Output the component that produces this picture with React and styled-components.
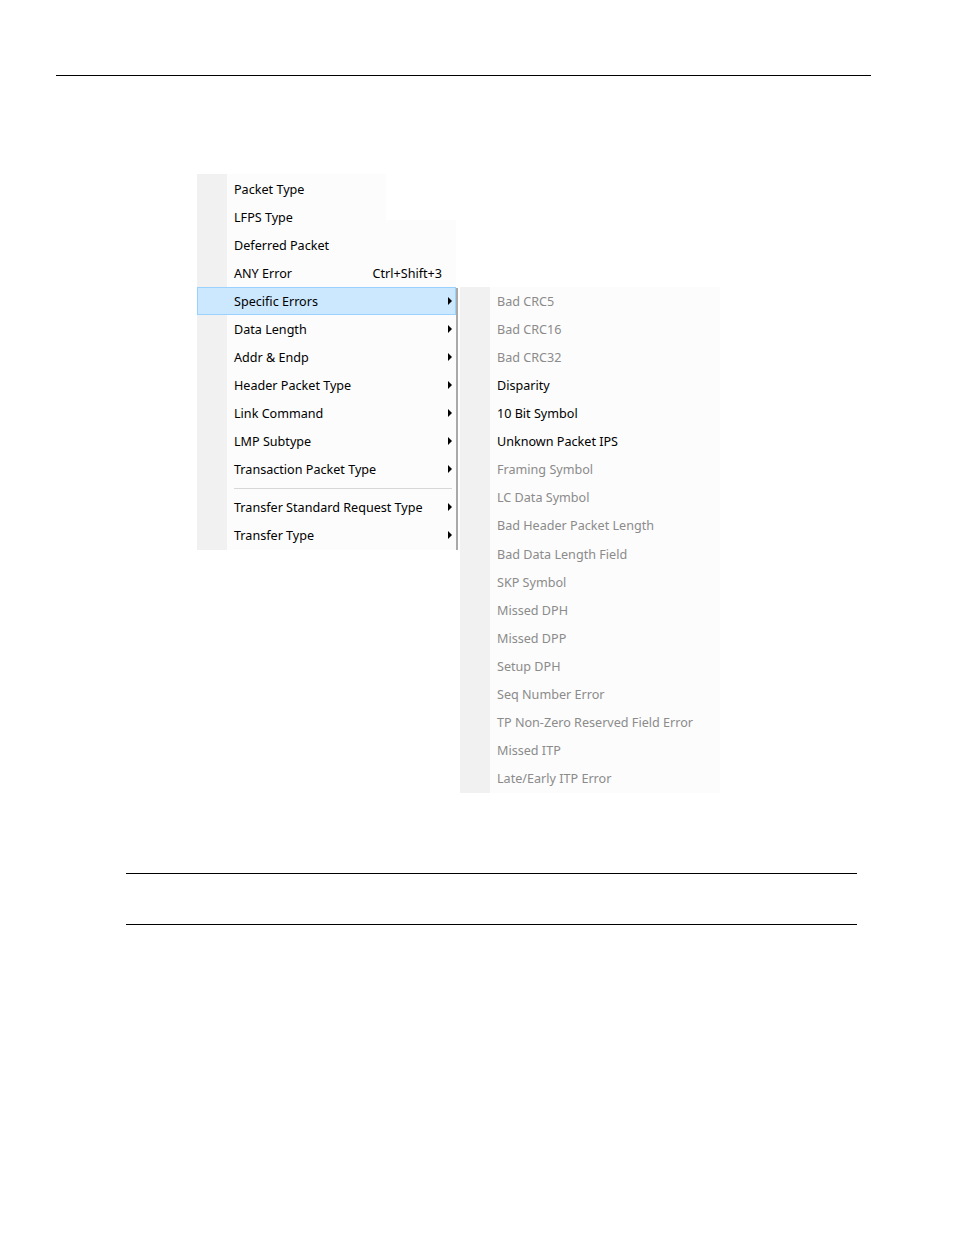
import React from "react";
import styled, { createGlobalStyle } from "styled-components";

const GlobalStyle = createGlobalStyle`
  body {
    margin: 0;
    background: #ffffff;
    font-family: "Noto Sans", "Open Sans", sans-serif;
  }
`;

const Page = styled.div`
  width: 954px;
  min-height: 1235px;
  padding-top: 75px;
  box-sizing: border-box;
`;

const Rule = styled.div`
  height: 1px;
  background: #000;
  margin-left: ${(p) => p.left}px;
  width: ${(p) => p.width}px;
  margin-top: ${(p) => p.top || 0}px;
`;

const MenuArea = styled.div`
  display: flex;
  align-items: flex-start;
  margin-top: 98px;
  margin-left: 197px;
  gap: 4px;
`;

const Menu = styled.div`
  position: relative;
  width: ${(p) => p.width}px;
  margin-top: ${(p) => p.offset || 0}px;
  padding: ${(p) => p.padTop || 0}px 0 ${(p) => p.padBottom || 0}px;
  background: linear-gradient(to right, #f1f1f1 30px, #fcfcfc 30px);
  font-size: 12.6px;
`;

/* the screen grab cut off the top-right corner of the main menu */
const CornerCut = styled.div`
  position: absolute;
  top: 0;
  right: 0;
  width: 70px;
  height: 46px;
  background: #ffffff;
`;

/* the thin dark edge drawn beside the open submenu */
const Edge = styled.div`
  position: absolute;
  top: 114px;
  bottom: 0;
  right: -2px;
  width: 2px;
  background: #a9a9a9;
`;

const Item = styled.div`
  position: relative;
  display: flex;
  align-items: center;
  height: ${(p) => p.rowHeight || 28}px;
  padding-left: 36px;
  padding-right: 13px;
  box-sizing: border-box;
  color: ${(p) => (p.disabled ? "#8b8b8b" : "#000000")};
  background: ${(p) => (p.active ? "#cce8ff" : "transparent")};
  border: 1px solid ${(p) => (p.active ? "#99d1ff" : "transparent")};
  z-index: 1;
`;

const Label = styled.span`
  flex: 1;
  white-space: nowrap;
`;

const Shortcut = styled.span`
  white-space: nowrap;
`;

const Arrow = styled.span`
  position: absolute;
  right: 3px;
  top: 50%;
  margin-top: -4px;
  width: 0;
  height: 0;
  border-left: 4px solid #000;
  border-top: 4px solid transparent;
  border-bottom: 4px solid transparent;
`;

const Separator = styled.div`
  height: 10px;
  display: flex;
  align-items: center;
  padding-left: 37px;
  padding-right: 4px;
  &::after {
    content: "";
    flex: 1;
    height: 1px;
    background: #d7d7d7;
  }
`;

const mainItems = [
  { label: "Packet Type" },
  { label: "LFPS Type" },
  { label: "Deferred Packet" },
  { label: "ANY Error", shortcut: "Ctrl+Shift+3" },
  { label: "Specific Errors", sub: true, active: true },
  { label: "Data Length", sub: true },
  { label: "Addr & Endp", sub: true },
  { label: "Header Packet Type", sub: true },
  { label: "Link Command", sub: true },
  { label: "LMP Subtype", sub: true },
  { label: "Transaction Packet Type", sub: true },
  { separator: true },
  { label: "Transfer Standard Request Type", sub: true },
  { label: "Transfer Type", sub: true },
];

const errorItems = [
  { label: "Bad CRC5", disabled: true },
  { label: "Bad CRC16", disabled: true },
  { label: "Bad CRC32", disabled: true },
  { label: "Disparity" },
  { label: "10 Bit Symbol" },
  { label: "Unknown Packet IPS" },
  { label: "Framing Symbol", disabled: true },
  { label: "LC Data Symbol", disabled: true },
  { label: "Bad Header Packet Length", disabled: true },
  { label: "Bad Data Length Field", disabled: true },
  { label: "SKP Symbol", disabled: true },
  { label: "Missed DPH", disabled: true },
  { label: "Missed DPP", disabled: true },
  { label: "Setup DPH", disabled: true },
  { label: "Seq Number Error", disabled: true },
  { label: "TP Non-Zero Reserved Field Error", disabled: true },
  { label: "Missed ITP", disabled: true },
  { label: "Late/Early ITP Error", disabled: true },
];

const renderItems = (items, rowHeight) =>
  items.map((it, i) =>
    it.separator ? (
      <Separator key={i} />
    ) : (
      <Item key={i} active={it.active} disabled={it.disabled} rowHeight={rowHeight}>
        <Label>{it.label}</Label>
        {it.shortcut && <Shortcut>{it.shortcut}</Shortcut>}
        {it.sub && <Arrow />}
      </Item>
    )
  );

const App = () => {
  return (
    <Page>
      <GlobalStyle />
      <Rule left={56} width={815} />
      <MenuArea>
        <Menu width={259} padTop={1} padBottom={1}>
          <CornerCut />
          <Edge />
          {renderItems(mainItems)}
        </Menu>
        <Menu width={260} offset={113} padBottom={0}>
          {renderItems(errorItems, 28.12)}
        </Menu>
      </MenuArea>
      <Rule left={126} width={731} top={80} />
      <Rule left={126} width={731} top={50} />
    </Page>
  );
};

export default App;
